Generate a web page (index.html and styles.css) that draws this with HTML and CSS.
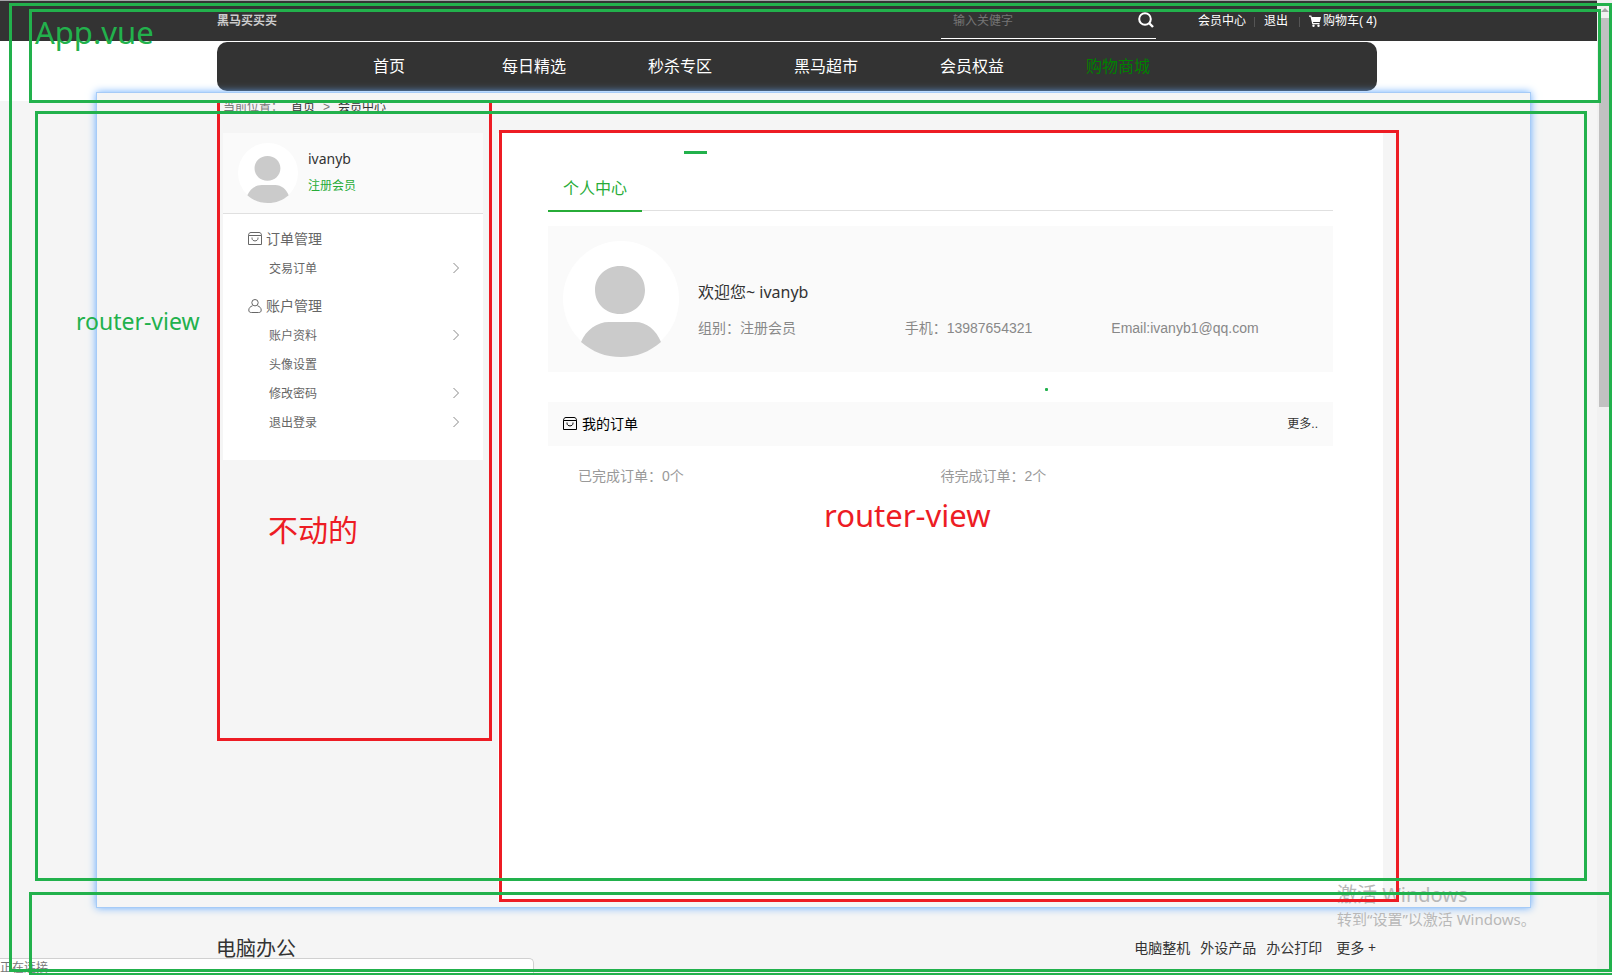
FILE: index.html
```
<!DOCTYPE html>
<html lang="zh-CN">
<head>
<meta charset="utf-8">
<title>会员中心</title>
<link rel="stylesheet" href="styles.css">
</head>
<body>
<svg class="defs" aria-hidden="true">
  <symbol id="bag" viewBox="0 0 14 14">
    <path d="M.5 3.500C.5 1.500 1.500.5 3 .5h8c1.500 0 2.500 1 2.500 3v9H.5zM.5 3.500h13M4 5.500v.7c0 3.600 6 3.600 6 0v-.7" fill="none" stroke="currentColor"/>
  </symbol>
  <symbol id="user" viewBox="0 0 14 14">
    <circle cx="7" cy="3.700" r="3.200" fill="none" stroke="currentColor"/>
    <path d="M4.500 6.800C2.300 7.500.8 9 .8 11c0 1.800.8 2.500 2.500 2.500h7.400c1.700 0 2.500-.7 2.500-2.500 0-2-1.500-3.500-3.700-4.200" fill="none" stroke="currentColor"/>
  </symbol>
  <symbol id="chevron" viewBox="0 0 6 12">
    <path d="M.5 1l5 5-5 5" fill="none" stroke="currentColor"/>
  </symbol>
  <symbol id="avatar" viewBox="0 0 116 116">
    <circle cx="58" cy="58" r="58" fill="#fff"/>
    <path d="M57 25c14 0 25 10 25 24S71 73 57 73 32 63 32 49 43 25 57 25zM46 81h26c12 0 21 8 26 20-12 10-24 15-40 15s-28-5-40-15c5-12 16-20 28-20z" fill="#cbcbcb"/>
  </symbol>
</svg>

<div class="page">
  <header class="topbar">
    <a class="brand" href="#">黑马买买买</a>
    <form class="search">
      <input class="search-input" type="text" aria-label="搜索" placeholder="输入关健字">
      <button class="search-button" type="button" aria-label="搜索">
        <svg width="16" height="16" viewBox="0 0 16 16"><circle cx="7" cy="7" r="5.800" fill="none" stroke="#fff" stroke-width="2"/><path d="M11 11l4 4" stroke="#fff" stroke-width="2.400"/></svg>
      </button>
    </form>
    <nav class="user-links">
      <a href="#">会员中心</a>
      <a href="#">退出</a>
      <a class="cart" href="#"><svg width="12" height="12" viewBox="0 0 12 12"><path d="M0 .5h2.300l.5 1.500H12l-1.200 5H4l.3 1h6.200v1.200H3.300L1.500 1.700H0z" fill="#fff"/><circle cx="4.500" cy="10.700" r="1.200" fill="#fff"/><circle cx="9.500" cy="10.700" r="1.200" fill="#fff"/></svg>购物车( 4)</a>
    </nav>
  </header>

  <div class="nav-wrap">
    <nav class="main-nav">
      <a class="home" href="#">首页</a>
      <a href="#">每日精选</a>
      <a href="#">秒杀专区</a>
      <a href="#">黑马超市</a>
      <a href="#">会员权益</a>
      <a class="mall" href="#">购物商城</a>
    </nav>
  </div>

  <section class="member">
    <nav class="crumbs"><span>当前位置：</span><a href="#">首页</a><span>&gt;</span><a href="#">会员中心</a></nav>
    <div class="columns">
      <aside class="sidebar">
        <div class="who">
          <svg class="who-avatar"><use href="#avatar"/></svg>
          <div>
            <p class="who-name">ivanyb</p>
            <p class="who-level">注册会员</p>
          </div>
        </div>
        <div class="menu">
          <h2 class="menu-title"><svg class="icon"><use href="#bag"/></svg>订单管理</h2>
          <a class="menu-item" href="#">交易订单<svg class="chevron"><use href="#chevron"/></svg></a>
          <h2 class="menu-title later"><svg class="icon"><use href="#user"/></svg>账户管理</h2>
          <a class="menu-item" href="#">账户资料<svg class="chevron"><use href="#chevron"/></svg></a>
          <a class="menu-item" href="#">头像设置</a>
          <a class="menu-item" href="#">修改密码<svg class="chevron"><use href="#chevron"/></svg></a>
          <a class="menu-item" href="#">退出登录<svg class="chevron"><use href="#chevron"/></svg></a>
        </div>
      </aside>

      <main class="content">
        <div class="tabs"><a class="tab" href="#">个人中心</a></div>
        <div class="profile">
          <svg class="profile-avatar"><use href="#avatar"/></svg>
          <div class="profile-text">
            <h1 class="welcome">欢迎您~ ivanyb</h1>
            <div class="facts">
              <span>组别：注册会员</span>
              <span>手机：13987654321</span>
              <span>Email:ivanyb1@qq.com</span>
            </div>
          </div>
        </div>
        <div class="orders-head">
          <h2 class="orders-title"><svg class="icon"><use href="#bag"/></svg>我的订单</h2>
          <a class="more" href="#">更多..</a>
        </div>
        <div class="orders">
          <span>已完成订单：0个</span>
          <span>待完成订单：2个</span>
        </div>
      </main>
    </div>
  </section>

  <section class="category">
    <h2 class="category-title">电脑办公</h2>
    <nav class="category-links">
      <a href="#">电脑整机</a>
      <a href="#">外设产品</a>
      <a href="#">办公打印</a>
      <a class="category-more" href="#">更多 +</a>
    </nav>
  </section>
</div>

<div class="scrollbar"><div class="arrow"></div><div class="thumb"></div></div>

<div class="overlay">
  <div class="status">正在连接...</div>
  <div class="watermark"><p class="wm-title">激活 Windows</p><p class="wm-text">转到“设置”以激活 Windows。</p></div>
  <div class="box red box-side"></div>
  <div class="box red box-main"></div>
  <div class="box box-all"></div>
  <div class="box box-head"></div>
  <div class="box box-view"></div>
  <div class="box box-foot"></div>
  <div class="dash"></div>
  <div class="dot"></div>
  <span class="note note-app">App.vue</span>
  <span class="note note-view">router-view</span>
  <span class="note note-side">不动的</span>
  <span class="note note-main">router-view</span>
</div>
</body>
</html>
```

FILE: styles.css
```
* { box-sizing: border-box; }

body {
  margin: 0;
  min-height: 100vh;
  display: flex;
  position: relative;
  overflow: hidden;
  background: #f5f5f5;
  color: #333;
  font: 12px/20px "Liberation Sans", "Noto Sans CJK SC", sans-serif;
}

a { color: inherit; text-decoration: none; }
h1, h2, p { margin: 0; font-weight: normal; }
svg { display: block; flex: none; }
.defs { position: absolute; width: 0; height: 0; }

.page { flex: 1; min-width: 0; height: 100vh; overflow: hidden; }

/* top bar */
.topbar {
  display: flex;
  height: 41px;
  padding: 0 220px 0 217px;
  border-top: 1px solid #a5a5a9;
  background: #333;
  color: #fff;
}
.brand { margin: 10px auto 0 0; color: #ccc; font-weight: bold; }
.search {
  display: flex;
  width: 215px;
  height: 38px;
  margin-right: 42px;
  border-bottom: 1px solid #fff;
}
.search-input {
  flex: 1;
  min-width: 0;
  height: 38px;
  padding: 2px 12px 0;
  border: 0;
  outline: 0;
  background: none;
  color: #fff;
  font: inherit;
}
.search-input::placeholder { color: #757575; }
.search-button { padding: 0 2px; border: 0; background: none; }
.user-links { display: flex; align-items: flex-start; gap: 18px; padding-top: 10px; }
.user-links a { position: relative; }
.user-links a + a::before {
  content: "";
  position: absolute;
  left: -10px;
  top: 6px;
  width: 1px;
  height: 10px;
  background: #555;
}
.user-links .cart { display: flex; align-items: center; gap: 2px; margin-left: 3px; }

/* main navigation */
.nav-wrap { padding: 1px 220px 10px 217px; background: #fff; }
.main-nav {
  display: flex;
  gap: 82px;
  padding-left: 156px;
  border-radius: 10px;
  background: #333;
  color: #fff;
  font-size: 16px;
  line-height: 49px;
}
.home { padding-right: 15px; }
.mall { color: #008000; }

/* member panel */
.member {
  position: relative;
  margin: -9px 66px 0 96px;
  padding: 0 147px 7px 126px;
  border: 1px solid #a6cbf7;
  background: #f5f5f5;
  box-shadow: 0 0 8px #6aaeff;
}
.crumbs { display: flex; gap: 8px; margin-bottom: 12px; color: #777; line-height: 28px; }
.crumbs a { color: #333; }
.columns { display: grid; grid-template-columns: 260px 1fr; gap: 15px; align-items: start; }

/* sidebar */
.sidebar { background: #fff; color: #666; }
.who {
  display: flex;
  gap: 10px;
  padding: 10px 15px;
  border-bottom: 1px solid #e0e0e0;
  background: #fafafa;
}
.who-avatar { width: 60px; height: 60px; }
.who-name { margin-top: 3px; color: #333; font-family: "Noto Sans", sans-serif; font-size: 14px; line-height: 26px; }
.who-level { color: #27ac38; line-height: 28px; }
.menu { padding: 10px 24px 22px 25px; }
.menu-title { display: flex; align-items: center; gap: 4px; font-size: 14px; line-height: 30px; }
.menu-title.later { margin-top: 7px; }
.icon { width: 14px; height: 14px; }
.menu-item { display: flex; align-items: center; justify-content: space-between; padding-left: 21px; line-height: 29px; }
.menu-title + .menu-item { margin-top: 1px; }
.chevron { width: 6px; height: 12px; margin-bottom: 3px; color: #888; }

/* content */
.content { min-height: 767px; padding: 33px 50px; background: #fff; }
.tabs { display: flex; height: 45px; border-bottom: 1px solid #e0e0e0; }
.tab {
  height: 46px;
  padding: 0 15px;
  border-bottom: 2px solid #27ac38;
  color: #27ac38;
  font-size: 16px;
  line-height: 46px;
}
.profile { display: flex; gap: 19px; margin: 15px 0 30px; padding: 15px; background: #fafafa; }
.profile-avatar { width: 116px; height: 116px; }
.profile-text { flex: 1; padding-top: 36px; }
.welcome { font-family: "Noto Sans", "Noto Sans CJK SC", sans-serif; font-size: 16px; line-height: 30px; }
.facts { display: grid; grid-template-columns: repeat(3, 1fr); color: #888; font-size: 14px; line-height: 43px; }
.orders-head {
  display: flex;
  justify-content: space-between;
  padding: 0 15px;
  background: #fafafa;
  line-height: 44px;
}
.orders-title { display: flex; align-items: center; gap: 5px; color: #000; font-size: 14px; }
.orders {
  display: grid;
  grid-template-columns: 1fr 1fr;
  padding: 15px 30px;
  color: #999;
  font-size: 14px;
  line-height: 30px;
}

/* category */
.category { display: flex; justify-content: space-between; padding: 26px 221px 0 216px; line-height: 30px; }
.category-title { font-size: 20px; }
.category-links { display: flex; gap: 10px; font: 14px/28px "Noto Sans", "Noto Sans CJK SC", sans-serif; }
.category-more { padding-left: 4px; }

/* scrollbar */
.scrollbar { width: 15px; padding: 8px 2px 0; background: #f1f1f1; }
.arrow { width: 0; margin: 0 auto; border: 4px solid transparent; border-top: 0; border-bottom-color: #a3a3a3; }
.thumb { height: 389px; margin-top: 6px; background: #c1c1c1; }

/* annotations drawn over the page */
.overlay { position: absolute; inset: 0; overflow: hidden; pointer-events: none; }
.overlay > * { position: absolute; }
.box { border: 3px solid #22b14c; }
.red { border-color: #ed1c24; }
.box-all { left: 9px; top: 3px; right: 0; bottom: 3px; }
.box-head { left: 29px; top: 9px; right: 11px; height: 94px; }
.box-view { left: 35px; top: 111px; right: 25px; height: 770px; }
.box-foot { left: 29px; top: 892px; right: -3px; bottom: -1px; }
.box-side { left: 217px; top: 100px; width: 275px; height: 641px; }
.box-main { left: 499px; top: 130px; right: 213px; height: 772px; }
.dash { left: 684px; top: 151px; width: 23px; height: 3px; background: #22b14c; }
.dot { left: 1045px; top: 388px; width: 3px; height: 3px; border-radius: 1px; background: #22b14c; }
.note { color: #22b14c; font-family: "Noto Sans", "Noto Sans CJK SC", sans-serif; font-size: 31px; line-height: 40px; white-space: nowrap; }
.note-app { left: 35px; top: 12px; }
.note-view { left: 76px; top: 301px; font-size: 23px; }
.note-side { left: 268px; top: 510px; color: #ed1c24; font-size: 30px; }
.note-main { left: 824px; top: 495px; color: #ed1c24; }
.status {
  left: 0;
  bottom: 0;
  width: 534px;
  height: 17px;
  border: 1px solid #d0d0d0;
  border-width: 1px 1px 0 0;
  border-top-right-radius: 5px;
  background: #fff;
  color: #777;
  line-height: 18px;
}
.watermark { left: 1337px; top: 881px; color: #b8b8b8; font-family: "Noto Sans", "Noto Sans CJK SC", sans-serif; white-space: nowrap; }
.wm-title { font-size: 20px; line-height: 28px; }
.wm-text { font-size: 15px; line-height: 20px; }
```
